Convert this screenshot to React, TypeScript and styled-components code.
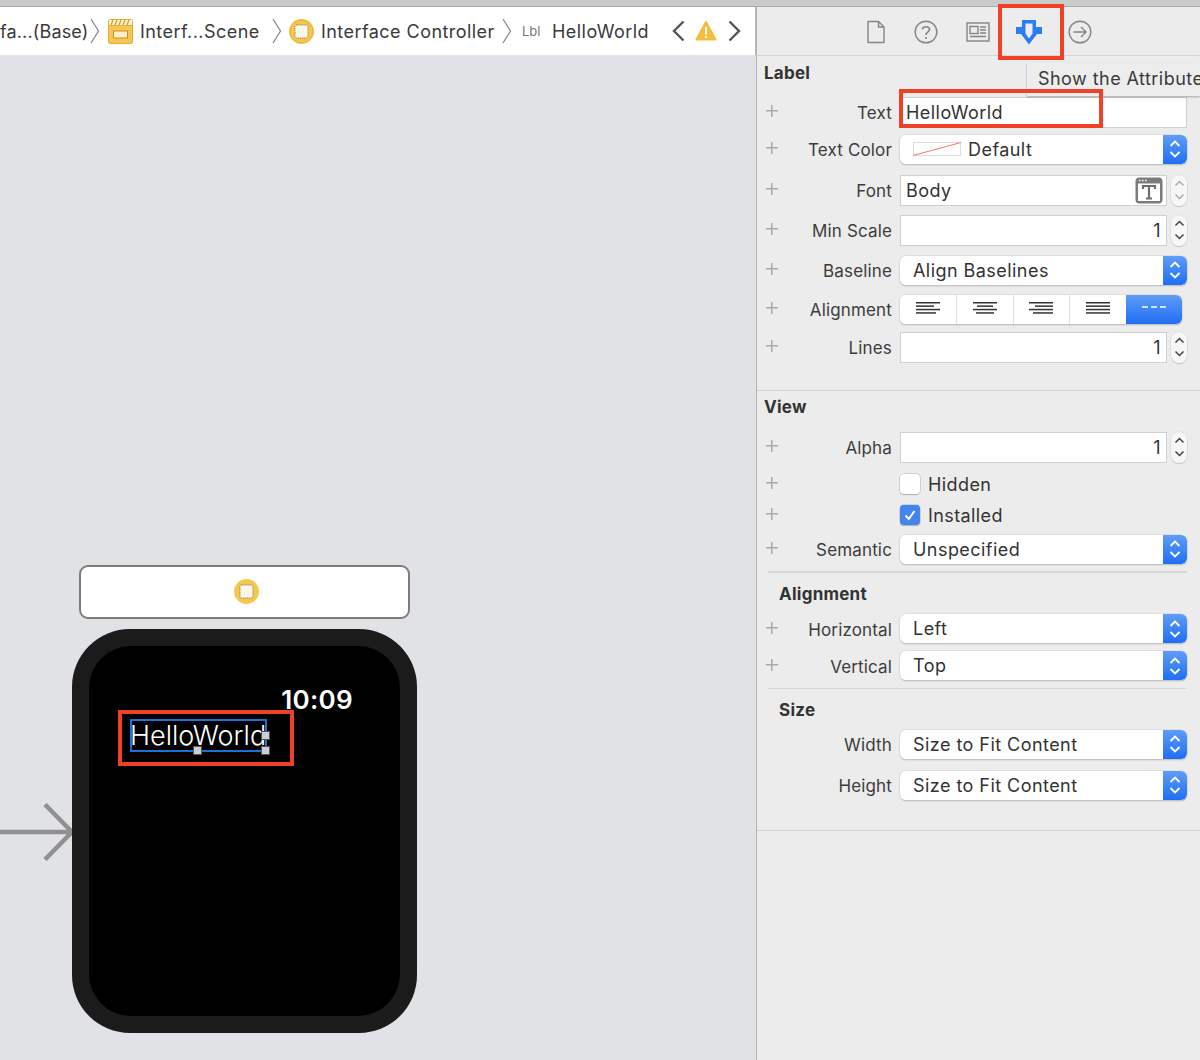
import styled, { createGlobalStyle } from "styled-components";

const GlobalStyle = createGlobalStyle`
html, body { margin: 0; padding: 0; background: #e1e2e6; }
body { font-family: Inter, "Liberation Sans", sans-serif; color: #333; }
* { box-sizing: border-box; }
`;

const Page = styled.div`
width: 1200px;
height: 1060px;
overflow: hidden;
position: relative;
display: flex;
flex-direction: column;
`;
const TopStrip = styled.div`
height: 7px;
flex: none;
background: #cbcbcb;
border-bottom: 1px solid #a9a9a9;
`;
const Columns = styled.div`
flex: 1;
display: flex;
min-height: 0;
`;
const Editor = styled.div`
width: 756px;
flex: none;
display: flex;
flex-direction: column;
`;
const JumpBar = styled.div`
height: 48px;
flex: none;
background: #fff;
display: flex;
align-items: center;
font-size: 18px;
letter-spacing: 0.45px;
color: #3a3a3a;
white-space: nowrap;
`;
const Crumb = styled.span<{ $w: number; $ml?: number; $tight?: boolean }>`
width: ${(p) => p.$w}px;
margin-left: ${(p) => p.$ml ?? 0}px;
letter-spacing: ${(p) => (p.$tight ? "0.15px" : "inherit")};
flex: none;
`;
const LblTag = styled.span`
margin-left: 10px;
width: 30px;
flex: none;
font-size: 13px;
letter-spacing: 0;
color: #777;
`;
const BarIcon = styled.svg<{ $ml: number }>`
margin-left: ${(p) => p.$ml}px;
flex: none;
display: block;
`;
const Canvas = styled.div`
flex: 1;
background: #e1e2e6;
position: relative;
padding: 510px 0 0 72px;
`;
const SceneBar = styled.div`
width: 331px;
height: 54px;
margin-left: 7px;
padding: 0 0 2px 3px;
background: #fff;
border: 2px solid #7d7d7d;
border-radius: 9px;
display: flex;
align-items: center;
justify-content: center;
`;
const Watch = styled.div`
position: relative;
margin-top: 10px;
width: 345px;
height: 404px;
background: #1b1b1b;
border-radius: 58px;
padding: 17px;
`;
const Screen = styled.div`
height: 100%;
background: #000;
border-radius: 42px;
position: relative;
padding: 38px 47px 0 41px;
`;
const Time = styled.div`
text-align: right;
color: #fff;
font-size: 26px;
font-weight: 600;
letter-spacing: 0.3px;
line-height: 32px;
`;
const LabelBox = styled.div`
margin-top: 3px;
width: 137px;
height: 33px;
border: 2px solid #1f6fd8;
position: relative;
color: #fff;
font-size: 27px;
font-weight: 300;
line-height: 29px;
text-indent: -2px;
white-space: nowrap;
overflow: hidden;
`;
const LabelWrap = styled.div`
position: relative;
width: 137px;
`;
const Handle = styled.div<{ $x: number; $y: number }>`
position: absolute;
left: ${(p) => p.$x}px;
top: ${(p) => p.$y}px;
width: 9px;
height: 9px;
background: #c9ced8;
border: 1px solid #555;
`;
const RedBox = styled.div`
position: absolute;
border: 4px solid #ee4125;
pointer-events: none;
`;
const WatchMark = styled(RedBox)`
left: 29px;
top: 64px;
width: 176px;
height: 56px;
`;
const ToolMark = styled(RedBox)`
left: 998px;
top: 4px;
width: 66px;
height: 56px;
`;
const TextMark = styled(RedBox)`
left: 899px;
top: 89px;
width: 204px;
height: 39px;
`;
const EntryArrow = styled.svg`
position: absolute;
left: 0;
top: 747px;
`;
const Inspector = styled.div`
flex: 1;
background: #ececec;
border-left: 2px solid #b4b4b4;
margin-left: -1px;
display: flex;
flex-direction: column;
`;
const Tabs = styled.div`
height: 49px;
flex: none;
padding-top: 1px;
border-bottom: 1px solid #d6d6d6;
display: flex;
align-items: center;
`;
const TabIcon = styled.svg<{ $ml: number }>`
margin-left: ${(p) => p.$ml}px;
flex: none;
display: block;
`;
const Section = styled.section<{ $h: number }>`
height: ${(p) => p.$h}px;
flex: none;
border-bottom: 1.5px solid #d6d6d6;
`;
const Heading = styled.h2<{ $ml?: number; $mt?: number }>`
margin: ${(p) => p.$mt ?? 6}px 0 0 ${(p) => p.$ml ?? 7}px;
font-size: 17px;
line-height: 22px;
font-weight: 700;
letter-spacing: 0.25px;
color: #333;
`;
const Rule = styled.div<{ $mt: number }>`
height: 1.5px;
background: #d6d6d6;
margin: ${(p) => p.$mt}px 13px 0 11px;
`;
const Row = styled.div<{ $mt: number }>`
height: 32px;
margin-top: ${(p) => p.$mt}px;
display: flex;
align-items: center;
position: relative;
`;
const Plus = styled.div`
position: absolute;
left: 9px;
top: 9px;
width: 12px;
height: 12px;
background:
  linear-gradient(#a9a9a9, #a9a9a9) center / 12px 1.5px no-repeat,
  linear-gradient(#a9a9a9, #a9a9a9) center / 1.5px 12px no-repeat;
`;
const RowLabel = styled.label`
width: 135px;
margin-top: 2px;
flex: none;
text-align: right;
font-size: 17px;
letter-spacing: 0.15px;
color: #3c3c3c;
white-space: nowrap;
`;
const Field = styled.div<{ $w: number; $right?: boolean }>`
width: ${(p) => p.$w}px;
height: 31px;
margin-left: 8px;
flex: none;
background: #fff;
border: 1.5px solid #cfcfcf;
display: flex;
align-items: center;
justify-content: ${(p) => (p.$right ? "flex-end" : "space-between")};
padding: 0 5px;
font-size: 18px;
letter-spacing: 0.45px;
color: #333;
position: relative;
`;
const Popup = styled.div`
width: 287px;
height: 29px;
margin-left: 8px;
flex: none;
background: #fff;
border-radius: 6px;
box-shadow: 0 0 0 0.5px #d4d4d4, 0 1px 1.5px #a8a8a8;
display: flex;
align-items: center;
padding-left: 13px;
font-size: 18px;
letter-spacing: 0.45px;
color: #333;
position: relative;
overflow: hidden;
`;
const PopupArrows = styled.div`
position: absolute;
right: 0;
top: 0;
bottom: 0;
width: 24px;
background: linear-gradient(#5e9cf7, #1f6ef4);
display: flex;
align-items: center;
justify-content: center;
`;
const Stepper = styled.div`
margin-left: 4px;
width: 16px;
height: 31px;
flex: none;
background: #f7f7f7;
border-radius: 8px;
box-shadow: 0 0 0 0.5px #d4d4d4, 0 1px 1px #bbb;
display: flex;
align-items: center;
justify-content: center;
`;
const ColorSwatch = styled.svg`
margin-right: 7px;
flex: none;
display: block;
`;
const FontButton = styled.svg`
display: block;
flex: none;
margin-right: -2px;
`;
const Segments = styled.div`
width: 282px;
height: 29px;
margin-left: 8px;
flex: none;
border-radius: 6px;
background: #fff;
box-shadow: 0 0 0 0.5px #d4d4d4, 0 1px 1.5px #a8a8a8;
display: flex;
overflow: hidden;
`;
const Segment = styled.div<{ $on?: boolean }>`
flex: 1;
display: flex;
align-items: flex-start;
justify-content: center;
padding-top: 7px;
background: ${(p) => (p.$on ? "linear-gradient(#5e9cf7, #1f6ef4)" : "#fff")};
border-left: ${(p) => (p.$on ? "none" : "1px solid #e0e0e0")};
&:first-child { border-left: none; }
`;
const Check = styled.div<{ $on?: boolean }>`
width: 20px;
height: 20px;
margin-left: 8px;
flex: none;
border-radius: 4px;
background: ${(p) => (p.$on ? "#4484f0" : "#fff")};
box-shadow: 0 0 0 0.5px #bcbcbc, 0 0.5px 1px #aaa;
display: flex;
align-items: center;
justify-content: center;
`;
const CheckText = styled.span`
margin-left: 8px;
font-size: 18px;
letter-spacing: 0.4px;
color: #333;
`;
const Tooltip = styled.div`
position: absolute;
left: 1027px;
top: 63px;
width: 173px;
height: 33px;
overflow: hidden;
background: #ededed;
box-shadow: 0 1px 2px rgba(0, 0, 0, 0.3);
font-size: 18px;
letter-spacing: 0.45px;
color: #3a3a3a;
line-height: 32px;
padding-left: 11px;
white-space: nowrap;
`;

function Chevron({ ml }: { ml: number }) {
  return (
    <BarIcon $ml={ml} width="10" height="26" viewBox="0 0 10 26">
      <path d="M1 1 L8.5 13 L1 25" fill="none" stroke="#8a8a8a" strokeWidth="1.3" />
    </BarIcon>
  );
}

function ControllerIcon({ ml }: { ml: number }) {
  return (
    <BarIcon $ml={ml} width="25" height="25" viewBox="0 0 25 25">
      <circle cx="12.5" cy="12.5" r="12.5" fill="#f5c84c" />
      <circle cx="12.5" cy="12.5" r="11.5" fill="none" stroke="#e9b234" strokeWidth="1" />
      <rect x="6" y="6" width="13" height="13" rx="1.5" fill="#fbf6e8" stroke="#7d7357" strokeWidth="1" strokeDasharray="1 1" />
    </BarIcon>
  );
}

function SceneIcon({ ml }: { ml: number }) {
  return (
    <BarIcon $ml={ml} width="25" height="25" viewBox="0 0 25 25">
      <rect x="0" y="0" width="25" height="25" rx="2.5" fill="#f6c653" />
      <rect x="0.5" y="0.5" width="24" height="24" rx="2.5" fill="none" stroke="#e7ae35" strokeWidth="1" />
      <rect x="1" y="1" width="23" height="5" fill="#fdf4d8" />
      <path d="M3 6 L5 1 M7 6 L9 1 M11 6 L13 1 M15 6 L17 1 M19 6 L21 1" stroke="#d9a02c" strokeWidth="1.4" />
      <rect x="1" y="6" width="23" height="1" fill="#e7ae35" />
      <rect x="5.5" y="12" width="14" height="7" fill="#fdf1cd" stroke="#c98f20" strokeWidth="1" />
    </BarIcon>
  );
}

function PopupGlyph() {
  return (
    <svg width="12" height="22" viewBox="0 0 12 22" style={{ display: "block" }}>
      <path d="M1.500 8 L6 3.500 L10.500 8 M1.500 14 L6 18.500 L10.500 14" fill="none" stroke="#fff" strokeWidth="1.800" />
    </svg>
  );
}

function StepGlyph({ color }: { color: string }) {
  return (
    <svg width="11" height="24" viewBox="0 0 11 24" style={{ display: "block" }}>
      <path d="M1.500 7.500 L5.500 3.500 L9.500 7.500 M1.500 16.500 L5.500 20.500 L9.500 16.500" fill="none" stroke={color} strokeWidth="1.500" />
    </svg>
  );
}

function Select({ value }: { value: string }) {
  return (
    <Popup>
      {value}
      <PopupArrows>
        <PopupGlyph />
      </PopupArrows>
    </Popup>
  );
}

function AlignGlyph({ lines }: { lines: [number, number][] }) {
  return (
    <svg width="24" height="14" viewBox="0 0 24 14" style={{ display: "block" }}>
      {lines.map(([x, w], i) => (
        <rect key={i} x={x} y={i * 3.4} width={w} height="1.5" fill="#333" />
      ))}
    </svg>
  );
}

function NumberRow({ label, mt }: { label: string; mt: number }) {
  return (
    <Row $mt={mt}>
      <Plus />
      <RowLabel>{label}</RowLabel>
      <Field $w={267} $right>1</Field>
      <Stepper>
        <StepGlyph color="#444" />
      </Stepper>
    </Row>
  );
}

function SelectRow({ label, value, mt, plus = true }: { label: string; value: string; mt: number; plus?: boolean }) {
  return (
    <Row $mt={mt}>
      {plus && <Plus />}
      <RowLabel>{label}</RowLabel>
      <Select value={value} />
    </Row>
  );
}

export default function App() {
  return (
    <Page>
      <GlobalStyle />
      <TopStrip />
      <Columns>
        <Editor>
          <JumpBar>
            <Crumb $w={90} $tight>fa...(Base)</Crumb>
            <Chevron ml={0} />
            <SceneIcon ml={8} />
            <Crumb $w={122} $ml={7}>Interf...Scene</Crumb>
            <Chevron ml={10} />
            <ControllerIcon ml={7} />
            <Crumb $w={176} $ml={7}>Interface Controller</Crumb>
            <Chevron ml={5} />
            <LblTag>Lbl</LblTag>
            <Crumb $w={100}>HelloWorld</Crumb>
            <BarIcon $ml={20} width="13" height="24" viewBox="0 0 13 24">
              <path d="M11.5 2.5 L2 12 L11.5 21.5" fill="none" stroke="#555" strokeWidth="2.4" />
            </BarIcon>
            <BarIcon $ml={10} width="22" height="22" viewBox="0 0 22 22">
              <path d="M11 2 L20.5 19.5 H1.5 Z" fill="#f5bd3f" stroke="#f5bd3f" strokeWidth="2" strokeLinejoin="round" />
              <rect x="10" y="7" width="2" height="7.5" fill="#fff" />
              <circle cx="11" cy="17" r="1.2" fill="#fff" />
            </BarIcon>
            <BarIcon $ml={11} width="13" height="24" viewBox="0 0 13 24">
              <path d="M1.5 2.5 L11 12 L1.5 21.5" fill="none" stroke="#555" strokeWidth="2.4" />
            </BarIcon>
          </JumpBar>
          <Canvas>
            <EntryArrow width="76" height="62" viewBox="0 0 76 62">
              <path d="M0 30 H71 M45 2.500 L72 30 L45 57.500" fill="none" stroke="#909090" strokeWidth="4.500" />
            </EntryArrow>
            <SceneBar>
              <svg width="25" height="25" viewBox="0 0 25 25">
                <circle cx="12.5" cy="12.5" r="12.5" fill="#f5c84c" />
                <rect x="6" y="6" width="13" height="13" rx="1.5" fill="#fbf6e8" stroke="#7d7357" strokeWidth="1" strokeDasharray="1 1" />
              </svg>
            </SceneBar>
            <Watch>
              <Screen>
                <Time>10:09</Time>
                <LabelWrap>
                  <LabelBox>HelloWorld</LabelBox>
                  <Handle $x={131} $y={12} />
                  <Handle $x={63} $y={27} />
                  <Handle $x={131} $y={27} />
                </LabelWrap>
                <WatchMark />
              </Screen>
            </Watch>
          </Canvas>
        </Editor>
        <Inspector>
          <Tabs>
            <TabIcon $ml={109} width="20" height="24" viewBox="0 0 20 24">
              <path d="M2 1.500 H12.500 L18 7 V22.500 H2 Z M12.500 1.500 V7 H18" fill="none" stroke="#858585" strokeWidth="1.4" />
            </TabIcon>
            <TabIcon $ml={28} width="24" height="24" viewBox="0 0 24 24">
              <circle cx="12" cy="12" r="10.800" fill="none" stroke="#858585" strokeWidth="1.400" />
              <path d="M8.500 9.500 C8.500 5.800 15.500 5.800 15.500 9.500 C15.500 12 12 12 12 15" fill="none" stroke="#858585" strokeWidth="1.600" />
              <circle cx="12" cy="18" r="1.100" fill="#858585" />
            </TabIcon>
            <TabIcon $ml={28} width="24" height="20" viewBox="0 0 24 20">
              <rect x="1" y="1" width="22" height="18" fill="none" stroke="#858585" strokeWidth="1.400" />
              <rect x="4" y="4.500" width="8" height="7" fill="none" stroke="#858585" strokeWidth="1.400" />
              <path d="M14 5 H20 M14 8 H20 M14 11 H20 M4 14.500 H20" stroke="#858585" strokeWidth="1.300" />
            </TabIcon>
            <TabIcon $ml={25} width="28" height="26" viewBox="0 0 28 26">
              <path d="M7 1 H21 V8 H27 V15 H22 L14 25.500 L6 15 H1 V8 H7 Z" fill="#2c7df5" />
              <path d="M10.500 4.500 H17.500 V14.500 L14 19.500 L10.500 14.500 Z" fill="#ececec" />
            </TabIcon>
            <TabIcon $ml={25} width="24" height="24" viewBox="0 0 24 24">
              <circle cx="12" cy="12" r="10.800" fill="none" stroke="#858585" strokeWidth="1.400" />
              <path d="M5.500 12 H18 M13 7 L18 12 L13 17" fill="none" stroke="#858585" strokeWidth="1.400" />
            </TabIcon>
          </Tabs>
          <Section $h={335}>
            <Heading>Label</Heading>
            <Row $mt={12}>
              <Plus />
              <RowLabel>Text</RowLabel>
              <Field $w={287}>HelloWorld</Field>
            </Row>
            <Row $mt={5}>
              <Plus />
              <RowLabel>Text Color</RowLabel>
              <Popup>
                <ColorSwatch width="48" height="14" viewBox="0 0 48 14">
                  <rect x="0.5" y="0.5" width="47" height="13" fill="#fff" stroke="#ddd" />
                  <path d="M0 13.500 L48 0.500" stroke="#ef7a70" strokeWidth="1" />
                </ColorSwatch>
                Default
                <PopupArrows>
                  <PopupGlyph />
                </PopupArrows>
              </Popup>
            </Row>
            <Row $mt={9}>
              <Plus />
              <RowLabel>Font</RowLabel>
              <Field $w={267}>
                Body
                <FontButton width="28" height="27" viewBox="0 0 28 27">
                  <rect x="0.500" y="0.500" width="27" height="26" rx="4" fill="#7b7b7b" />
                  <rect x="3" y="6.500" width="22" height="17.500" fill="#fff" />
                  <path d="M4 3.500 H5.500 M7 3.500 H8.500 M10 3.500 H11.500" stroke="#fff" strokeWidth="1.300" />
                  <path d="M8 12 V9 H20 V12 M14 9 V21 M11 21.500 H17" fill="none" stroke="#6d6d6d" strokeWidth="2.200" />
                </FontButton>
              </Field>
              <Stepper>
                <StepGlyph color="#aaa" />
              </Stepper>
            </Row>
            <NumberRow label="Min Scale" mt={8} />
            <SelectRow label="Baseline" value="Align Baselines" mt={8} />
            <Row $mt={7}>
              <Plus />
              <RowLabel>Alignment</RowLabel>
              <Segments>
                <Segment><AlignGlyph lines={[[0, 24], [0, 18], [0, 24], [0, 20]]} /></Segment>
                <Segment><AlignGlyph lines={[[0, 24], [4, 16], [0, 24], [3, 18]]} /></Segment>
                <Segment><AlignGlyph lines={[[0, 24], [6, 18], [0, 24], [4, 20]]} /></Segment>
                <Segment><AlignGlyph lines={[[0, 24], [0, 24], [0, 24], [0, 24]]} /></Segment>
                <Segment $on>
                  <svg width="24" height="14" viewBox="0 0 24 14" style={{ display: "block" }}>
                    <path d="M0 5 H6 M9 5 H15 M18 5 H24" stroke="#fff" strokeWidth="1.500" />
                  </svg>
                </Segment>
              </Segments>
            </Row>
            <NumberRow label="Lines" mt={6} />
          </Section>
          <Section $h={440}>
            <Heading $mt={5}>View</Heading>
            <NumberRow label="Alpha" mt={13} />
            <Row $mt={5}>
              <Plus />
              <RowLabel />
              <Check />
              <CheckText>Hidden</CheckText>
            </Row>
            <Row $mt={-1}>
              <Plus />
              <RowLabel />
              <Check $on>
                <svg width="14" height="14" viewBox="0 0 14 14">
                  <path d="M2.500 7.500 L5.800 11 L11.500 3" fill="none" stroke="#fff" strokeWidth="2" />
                </svg>
              </Check>
              <CheckText>Installed</CheckText>
            </Row>
            <SelectRow label="Semantic" value="Unspecified" mt={2} />
            <Rule $mt={6} />
            <Heading $ml={22} $mt={10}>Alignment</Heading>
            <SelectRow label="Horizontal" value="Left" mt={8} />
            <SelectRow label="Vertical" value="Top" mt={5} />
            <Rule $mt={6} />
            <Heading $ml={22} $mt={10}>Size</Heading>
            <SelectRow label="Width" value="Size to Fit Content" mt={7} plus={false} />
            <SelectRow label="Height" value="Size to Fit Content" mt={9} plus={false} />
          </Section>
        </Inspector>
      </Columns>
      <ToolMark />
      <Tooltip>Show the Attributes</Tooltip>
      <TextMark />
    </Page>
  );
}
